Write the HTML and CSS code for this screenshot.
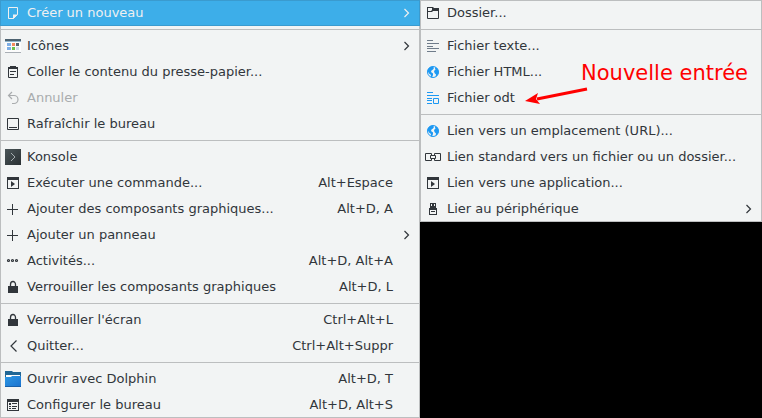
FILE: index.html
```html
<!DOCTYPE html>
<html lang="fr">
<head>
<meta charset="utf-8">
<title>Menu du bureau</title>
<link rel="stylesheet" href="styles.css">
</head>
<body>
<svg class="defs" aria-hidden="true">
  <defs>
    <linearGradient id="dark" x1="0" y1="0" x2="1" y2="1"><stop offset="0" stop-color="#4a5558"/><stop offset="1" stop-color="#2a3033"/></linearGradient>
    <linearGradient id="blue" x1="0" y1="0" x2="1" y2="1"><stop offset="0" stop-color="#2c97e3"/><stop offset="1" stop-color="#1a72cf"/></linearGradient>
    <symbol id="chevron" viewBox="0 0 8 10"><path d="M1.5 1 5.5 5l-4 4" fill="none" stroke="currentColor" stroke-width="1.2"/></symbol>
    <symbol id="plus" viewBox="0 0 16 16"><path d="M2 8.5h11M7.5 3v11" fill="none" stroke="currentColor"/></symbol>
    <symbol id="lock" viewBox="0 0 16 16"><path d="M5.5 8V5.5a2.5 3 0 0 1 5 0V8" fill="none" stroke="currentColor" stroke-width="1.3"/><path d="M3 7h10v7H3z" fill="currentColor"/></symbol>
    <symbol id="run" viewBox="0 0 16 16"><path d="M2 2h12v12H2zM3 5v8h10V5z" fill="currentColor" fill-rule="evenodd"/><path d="M6 6v6l4-3z" fill="currentColor"/></symbol>
    <symbol id="globe" viewBox="0 0 16 16"><circle cx="8" cy="8" r="5.5" fill="#f2f4f4" stroke="#1d99f3"/><path d="M3 5 5 3l3-.5L9 4 8 5.500 6.500 6.500 6 8l2 1.500v1.500L7 13.500 5.500 13 6 11 4 9.500 2.500 7zM10 3l2.500 1.500L13.500 7v2.500L12 12l-1.500 1 .5-2.500L9.500 9 9 7l1.500-1.500L10 4.500z" fill="#1d99f3"/></symbol>
  </defs>
</svg>
<main class="desktop">
  <nav class="menu" aria-label="Bureau">
    <button class="item active" aria-haspopup="menu" aria-expanded="true">
      <svg class="icon" viewBox="0 0 16 16"><path d="M3.5 2.5h9v7l-4 4h-5z" fill="none" stroke="currentColor"/><path d="M8 14V9.5h5z" fill="currentColor"/></svg>
      <span class="label">Créer un nouveau</span><svg class="arrow"><use href="#chevron"/></svg>
    </button>
    <hr>
    <button class="item" aria-haspopup="menu">
      <svg class="icon" viewBox="0 0 16 16"><path d="M0 1h16v14H0z" fill="#fcfcfc"/><path d="M0 1h16v2H0z" fill="#4d6270"/><path d="M0 3h16v1H0z" fill="#8fb5cd"/><path d="M0 14h16v1H0z" fill="#a9afb5"/><path d="M2 5h4v3H2zM2 9h4v3H2z" fill="#7eafe6"/><path d="M7 5h3v3H7z" fill="#f48a5f"/><path d="M7 9h3v3H7z" fill="#6fc04b"/><path d="M11 5h3v3h-3z" fill="#56646f"/><path d="M11 9h3v3h-3z" fill="#cfdbe8"/></svg>
      <span class="label">Icônes</span><svg class="arrow"><use href="#chevron"/></svg>
    </button>
    <button class="item">
      <svg class="icon" viewBox="0 0 16 16"><path d="M3.5 3.5h9v10h-9z" fill="none" stroke="currentColor"/><path d="M3 3h2V2h6v1h2v2H3zM5 7h6v1H5zM5 10h4v1H5z" fill="currentColor"/></svg>
      <span class="label">Coller le contenu du presse-papier...</span>
    </button>
    <button class="item" disabled>
      <svg class="icon" viewBox="0 0 16 16"><path d="M7 2 3.5 5.5 7 9M3.5 5.5H9a4 4 0 0 1 0 8H7" fill="none" stroke="currentColor" stroke-width="1.2"/></svg>
      <span class="label">Annuler</span>
    </button>
    <button class="item">
      <svg class="icon" viewBox="0 0 16 16"><path d="M2.5 2.5h11v11h-11zM4 11.5h8" fill="none" stroke="currentColor"/></svg>
      <span class="label">Rafraîchir le bureau</span>
    </button>
    <hr>
    <button class="item">
      <svg class="icon" viewBox="0 0 16 16"><path d="M0 0h16v16H0z" fill="url(#dark)"/><path d="m6 4 4 4-4 4" fill="none" stroke="#a5adb0"/></svg>
      <span class="label">Konsole</span>
    </button>
    <button class="item"><svg class="icon"><use href="#run"/></svg><span class="label">Exécuter une commande...</span><kbd>Alt+Espace</kbd></button>
    <button class="item"><svg class="icon"><use href="#plus"/></svg><span class="label">Ajouter des composants graphiques...</span><kbd>Alt+D, A</kbd></button>
    <button class="item" aria-haspopup="menu"><svg class="icon"><use href="#plus"/></svg><span class="label">Ajouter un panneau</span><svg class="arrow"><use href="#chevron"/></svg></button>
    <button class="item">
      <svg class="icon" viewBox="0 0 16 16"><g fill="none" stroke="currentColor" stroke-width="1.2"><circle cx="3.5" cy="7.5" r="1"/><circle cx="7.5" cy="7.5" r="1"/><circle cx="11.5" cy="7.5" r="1"/></g></svg>
      <span class="label">Activités...</span><kbd>Alt+D, Alt+A</kbd>
    </button>
    <button class="item"><svg class="icon"><use href="#lock"/></svg><span class="label">Verrouiller les composants graphiques</span><kbd>Alt+D, L</kbd></button>
    <hr>
    <button class="item"><svg class="icon"><use href="#lock"/></svg><span class="label">Verrouiller l'écran</span><kbd>Ctrl+Alt+L</kbd></button>
    <button class="item">
      <svg class="icon" viewBox="0 0 16 16"><path d="M11.5 2.5 6 8l5.5 5.5" fill="none" stroke="currentColor" stroke-width="1.2"/></svg>
      <span class="label">Quitter...</span><kbd>Ctrl+Alt+Suppr</kbd>
    </button>
    <hr>
    <button class="item">
      <svg class="icon" viewBox="0 0 16 16"><path d="M0 0h7l1 1h8v7H0z" fill="#1f6695"/><path d="M1 4h14v3H1z" fill="#fcfcfc"/><path d="M0 6h6l1-1h9v11H0z" fill="url(#blue)"/><path d="M0 15h16v1H0z" fill="#175fa8"/></svg>
      <span class="label">Ouvrir avec Dolphin</span><kbd>Alt+D, T</kbd>
    </button>
    <button class="item">
      <svg class="icon" viewBox="0 0 16 16"><path d="M2 2h12v12H2zM3 5v8h10V5zM4 6h2v2H4zM4 9h2v1H4zM4 11h2v1H4zM7 6h5v1H7zM7 9h5v1H7zM7 11h4v1H7z" fill="currentColor" fill-rule="evenodd"/></svg>
      <span class="label">Configurer le bureau</span><kbd>Alt+D, Alt+S</kbd>
    </button>
  </nav>

  <nav class="menu" aria-label="Créer un nouveau">
    <button class="item">
      <svg class="icon" viewBox="0 0 16 16"><path d="M2.5 2.5h5l1 2h5v9h-11z" fill="none" stroke="currentColor"/><path d="M2 2h6l1 1h5v3H8L7 7H2V6h4l1-1V3H3v3H2z" fill="currentColor"/></svg>
      <span class="label">Dossier...</span>
    </button>
    <hr>
    <button class="item">
      <svg class="icon" viewBox="0 0 16 16"><path d="M2 2.5h6M2 5.5h12M2 8.5h6M2 10.5h12M2 13.5h9" fill="none" stroke="#6f7c8a"/></svg>
      <span class="label">Fichier texte...</span>
    </button>
    <button class="item"><svg class="icon"><use href="#globe"/></svg><span class="label">Fichier HTML...</span></button>
    <div class="noted">
      <button class="item">
        <svg class="icon" viewBox="0 0 16 16"><path d="M2 2.5h6M2 5.5h12M2 8.5h5M2 10.5h5M2 13.5h5M8.5 8.5h5v5h-5z" fill="none" stroke="#1d99f3"/></svg>
        <span class="label">Fichier odt</span>
      </button>
      <div class="note">
        <span>Nouvelle entrée</span>
        <svg class="pointer" viewBox="0 0 64 18"><path d="M62 2 12 12" fill="none" stroke="red" stroke-width="3"/><path d="M0 14 13 6l-2 6 4 5z" fill="red"/></svg>
      </div>
    </div>
    <hr>
    <button class="item"><svg class="icon"><use href="#globe"/></svg><span class="label">Lien vers un emplacement (URL)...</span></button>
    <button class="item">
      <svg class="icon" viewBox="0 0 16 16"><path d="M6.5 6V4.5h-6v7h6V10M9.5 6V4.5h6v7h-6V10M5.5 6.5h5v3h-5z" fill="none" stroke="currentColor"/></svg>
      <span class="label">Lien standard vers un fichier ou un dossier...</span>
    </button>
    <button class="item"><svg class="icon"><use href="#run"/></svg><span class="label">Lien vers une application...</span></button>
    <button class="item" aria-haspopup="menu">
      <svg class="icon" viewBox="0 0 16 16"><path d="M5 2h6v6H5zM6 3v2h1V3zM9 3v2h1V3zM4 7h8v7H4zM5 9v4h6V9z" fill="currentColor" fill-rule="evenodd"/><path d="M5 7h6v1H5zM6 10h4v1H6z" fill="currentColor"/></svg>
      <span class="label">Lier au périphérique</span><svg class="arrow"><use href="#chevron"/></svg>
    </button>
  </nav>
</main>
</body>
</html>
```
FILE: styles.css
```css
* {
  box-sizing: border-box;
}

body {
  margin: 0;
  background: #000;
  color: #31363b;
  font: 13px/16px "DejaVu Sans", sans-serif;
}

.defs {
  position: absolute;
  width: 0;
  height: 0;
}

.desktop {
  display: grid;
  grid-template-columns: 420fr 342fr;
  align-items: start;
}

.menu {
  display: flex;
  flex-direction: column;
  background: #f2f4f4;
  box-shadow: inset 0 0 0 1px #bcbebf;
}

.item {
  display: flex;
  align-items: center;
  gap: 6px;
  width: 100%;
  height: 26px;
  margin: 0;
  padding: 0 9px 0 5px;
  border: 0;
  background: none;
  color: inherit;
  font: inherit;
  text-align: left;
  white-space: nowrap;
}

.item.active {
  background: #3daee9;
  box-shadow: inset 0 0 0 1px #3a9bcf;
  color: #eff0f1;
}

.item:disabled {
  color: #a9acae;
}

.icon {
  flex: none;
  width: 16px;
  height: 16px;
}

.label {
  flex: 1;
}

.arrow {
  flex: none;
  width: 8px;
  height: 10px;
}

kbd {
  margin-right: 18px;
  font: inherit;
}

hr {
  width: 100%;
  height: 1px;
  margin: 3px 0;
  border: 0;
  background: #bcbebf;
}

.noted {
  position: relative;
}

.note {
  position: absolute;
  right: 14px;
  bottom: 6px;
  display: flex;
  flex-direction: column;
  color: red;
  font-size: 21px;
  line-height: 28px;
  white-space: nowrap;
  pointer-events: none;
}

.pointer {
  width: 64px;
  height: 18px;
  margin-left: -56px;
}
```
